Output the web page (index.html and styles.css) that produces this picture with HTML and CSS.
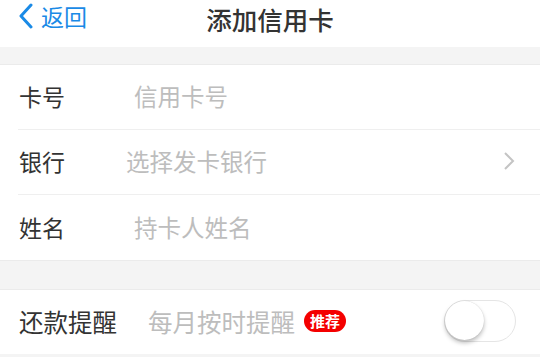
FILE: index.html
```html
<!DOCTYPE html>
<html lang="zh">
<head>
<meta charset="utf-8">
<link rel="stylesheet" href="styles.css">
</head>
<body>
<div class="page">
  <header class="nav">
    <div class="back">
      <svg class="back-icon" width="16" height="26" viewBox="0 0 16 26"><path d="M13 2 L3 13 L13 24" fill="none" stroke="#1a8ae6" stroke-width="3" stroke-linecap="round" stroke-linejoin="round"/></svg>
      <span>返回</span>
    </div>
    <div class="title">添加信用卡</div>
  </header>
  <div class="gap gap-top"></div>
  <section class="group">
    <div class="row">
      <span class="label">卡号</span>
      <span class="ph ph-card">信用卡号</span>
    </div>
    <div class="row">
      <span class="label">银行</span>
      <span class="ph ph-bank">选择发卡银行</span>
      <svg class="chev" width="12" height="20" viewBox="0 0 12 20"><path d="M2 2 L10 10 L2 18" fill="none" stroke="#c4c4c4" stroke-width="2"/></svg>
    </div>
    <div class="row">
      <span class="label">姓名</span>
      <span class="ph ph-card">持卡人姓名</span>
    </div>
  </section>
  <div class="gap gap-mid"></div>
  <section class="group">
    <div class="row row-last">
      <span class="label label-wide">还款提醒</span>
      <span class="ph ph-remind">每月按时提醒</span>
      <span class="badge">推荐</span>
      <span class="toggle"><span class="knob"></span></span>
    </div>
  </section>
  <div class="gap"></div>
</div>
</body>
</html>
```
FILE: styles.css
```css
* { box-sizing: border-box; }
html, body { margin: 0; padding: 0; }
body {
  background: #f4f4f4;
  font-family: "Noto Sans CJK SC", "Noto Sans", sans-serif;
  width: 540px;
  height: 357px;
  overflow: hidden;
}
.nav {
  height: 47px;
  padding-top: 0;
  background: #fff;
  position: relative;
  display: flex;
  align-items: flex-start;
  justify-content: center;
}
.back {
  position: absolute;
  left: 18px;
  top: 1px;
  height: 29px;
  display: flex;
  align-items: center;
  gap: 7px;
  color: #1a8ae6;
  font-family: "Liberation Sans", "Noto Sans CJK SC", sans-serif;
  font-size: 23px;
}
.title {
  font-family: "Liberation Sans", "Noto Sans CJK SC", sans-serif;
  line-height: normal;
  font-size: 25.5px;
  font-weight: 500;
  color: #333;
}
.gap { background: #f4f4f4; }
.gap-top { height: 18px; border-bottom: 1px solid #ebebeb; }
.gap-mid { height: 30px; border-top: 1px solid #ebebeb; border-bottom: 1px solid #ebebeb; }
.group { background: #fff; }
.row {
  height: 65px;
  margin-left: 18px;
  padding-right: 25px;
  padding-bottom: 2px;
  display: flex;
  align-items: center;
  border-bottom: 1px solid #efefef;
}
.group .row:last-child { border-bottom: none; }
.row-last { height: 64px; padding-right: 24px; }
.label {
  font-size: 23px;
  color: #333;
  width: 116px;
  flex: none;
  padding-left: 1px;
}
.label-wide { font-size: 24.5px; width: 130px; }
.ph { color: #bdbdbd; font-size: 23.5px; flex: none; }
.ph-bank { margin-left: -8px; }
.ph-remind { font-size: 24.5px; }
.chev { margin-left: auto; }
.badge {
  margin-left: 9px;
  background: #f40000;
  color: #fff;
  font-size: 15px;
  font-weight: 700;
  height: 22px;
  line-height: 22px;
  padding: 0 6px;
  border-radius: 11px;
}
.toggle {
  margin-left: auto;
  width: 72px;
  height: 42px;
  border-radius: 21px;
  border: 1.5px solid #e5e5e5;
  background: #fff;
  position: relative;
}
.knob {
  position: absolute;
  left: 0;
  top: 0;
  width: 39px;
  height: 39px;
  border-radius: 50%;
  background: #fff;
  box-shadow: 0 3px 4px rgba(0,0,0,0.25), 0 0 1px rgba(0,0,0,0.2);
}
```
